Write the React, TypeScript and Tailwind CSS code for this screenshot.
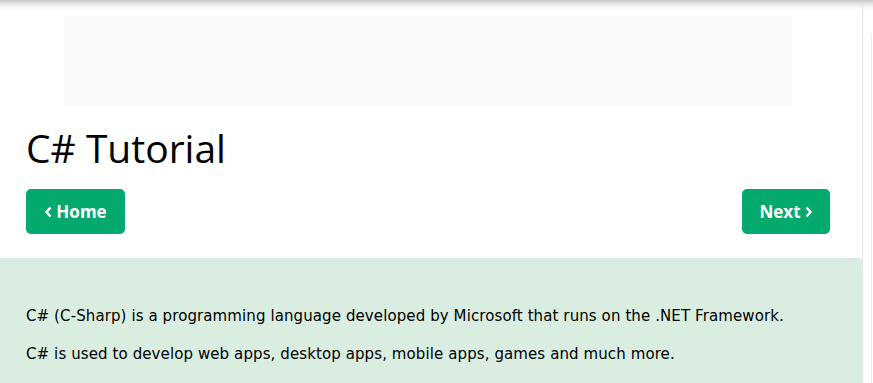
import React from "react";

export default function App() {
  return (
    <div className="relative w-[873px] h-[383px] overflow-hidden bg-white flex">
      <div className="absolute left-0 top-0 w-full h-[10px] bg-gradient-to-b from-[#c8c8c8] via-[#ececec] to-transparent z-10" />
      <div className="w-[863px] flex flex-col border-r border-[#e6e6e6]">
        <div className="pt-[16px] flex justify-center">
          <div className="w-[728px] h-[90px] bg-[#f9f9f9] ml-[-6px]" />
        </div>
        <div className="pl-[26px] pr-[32px]">
          <h1 className="mt-[22px] text-[39px] leading-[1] font-['Open_Sans',sans-serif] text-black">
            C# Tutorial
          </h1>
          <div className="mt-[22px] flex justify-between">
            <div className="w-[99px] h-[45px] bg-[#04AA6D] rounded-[5px] flex items-center justify-center text-white font-bold text-[17px] font-['Open_Sans',sans-serif] gap-[3px]">
              <svg width="9" height="12" viewBox="0 0 9 12"><path d="M6.5 1.5 L2.5 6 L6.5 10.5" stroke="white" strokeWidth="2.4" fill="none" /></svg>
              <span>Home</span>
            </div>
            <div className="w-[88px] h-[45px] bg-[#04AA6D] rounded-[5px] flex items-center justify-center text-white font-bold text-[17px] font-['Open_Sans',sans-serif] gap-[3px]">
              <span>Next</span>
              <svg width="9" height="12" viewBox="0 0 9 12"><path d="M2.5 1.5 L6.5 6 L2.5 10.5" stroke="white" strokeWidth="2.4" fill="none" /></svg>
            </div>
          </div>
        </div>
        <div className="mt-[24px] flex-1 bg-[#D9EEE1] px-[26px] pt-[47px] font-['DejaVu_Sans',sans-serif] text-[15px] tracking-[0.1px] text-black leading-[22px]">
          <p>C# (C-Sharp) is a programming language developed by Microsoft that runs on the .NET Framework.</p>
          <p className="mt-[16px]">C# is used to develop web apps, desktop apps, mobile apps, games and much more.</p>
        </div>
      </div>
      <div className="flex-1 pt-[34px] flex justify-end pr-[1px]">
        <div className="w-[1px] h-full bg-[#ebe8f8]" />
      </div>
    </div>
  );
}
